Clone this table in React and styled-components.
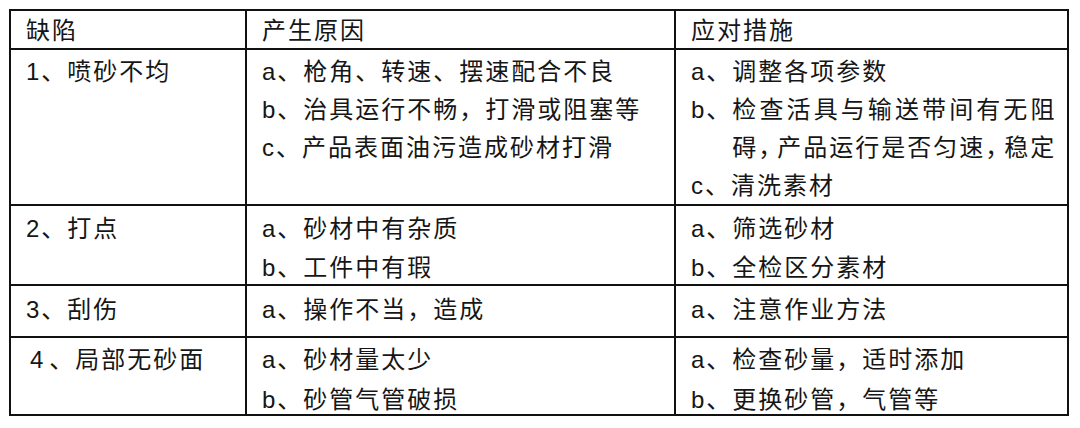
import React from "react"
import styled, { createGlobalStyle } from "styled-components"

const GlobalStyle = createGlobalStyle`
    html, body {
        margin: 0;
        padding: 0;
        background: #ffffff;
    }
    body {
        font-family: "Liberation Sans", "Noto Sans CJK SC", sans-serif;
        color: #161616;
    }
`

const Page = styled.div`
    padding: 9px 0 0 9px;
`

const Grid = styled.div`
    display: grid;
    grid-template-columns: 236px 429px 393px;
    grid-template-rows: 39px 156px 80px 52px 78px;
    width: max-content;
    border-top: 2px solid #111;
    border-left: 2px solid #111;
    font-size: 24px;
    letter-spacing: 2px;
    line-height: 38px;
`

const Cell = styled.div`
    box-sizing: border-box;
    padding: ${props => props.$top ?? 3}px 4px 0 15px;
    border-right: 2px solid #111;
    border-bottom: 2px solid #111;
    line-height: ${props => props.$lh ?? 38}px;
    white-space: nowrap;
    overflow: visible;
`

const HeadCell = styled(Cell)`
    padding-top: 1px;
`

const Item = styled.div`
    display: flex;
`

const Marker = styled.span`
    flex: none;
`

const Body = styled.span`
    display: block;
`

// Word justified the long line, so a few spans are stretched or squeezed
const Wide = styled.span`
    letter-spacing: 3.1px;
`

const Narrow = styled.span`
    letter-spacing: -5px;
`

const defects = [
    {
        name: "1、喷砂不均",
        lh: 38,
        causes: [
            { m: "a、", lines: ["枪角、转速、摆速配合不良"] },
            { m: "b、", lines: ["治具运行不畅，打滑或阻塞等"] },
            { m: "c、", lines: ["产品表面油污造成砂材打滑"] },
        ],
        fixes: [
            { m: "a、", lines: ["调整各项参数"] },
            {
                m: "b、",
                lines: [
                    <Wide>检查活具与输送带间有无阻</Wide>,
                    <>碍<Narrow>，</Narrow>产品运行是否匀速<Narrow>，</Narrow>稳定</>,
                ],
            },
            { m: "c、", lines: ["清洗素材"] },
        ],
    },
    {
        name: "2、打点",
        lh: 39,
        causes: [
            { m: "a、", lines: ["砂材中有杂质"] },
            { m: "b、", lines: ["工件中有瑕"] },
        ],
        fixes: [
            { m: "a、", lines: ["筛选砂材"] },
            { m: "b、", lines: ["全检区分素材"] },
        ],
    },
    {
        name: "3、刮伤",
        top: 5,
        causes: [{ m: "a、", lines: ["操作不当，造成"] }],
        fixes: [{ m: "a、", lines: ["注意作业方法"] }],
    },
    {
        name: "\u200A4\u200A、局部无砂面",
        lh: 40,
        top: 2,
        causes: [
            { m: "a、", lines: ["砂材量太少"] },
            { m: "b、", lines: ["砂管气管破损"] },
        ],
        fixes: [
            { m: "a、", lines: ["检查砂量，适时添加"] },
            { m: "b、", lines: ["更换砂管，气管等"] },
        ],
    },
]

function ItemList({ items }) {
    return items.map((it, i) => (
        <Item key={i}>
            <Marker>{it.m}</Marker>
            <Body>
                {it.lines.map((l, j) => (
                    <React.Fragment key={j}>
                        {j > 0 && <br />}
                        {l}
                    </React.Fragment>
                ))}
            </Body>
        </Item>
    ))
}

export default function App() {
    return (
        <>
            <GlobalStyle />
            <Page>
                <Grid>
                    <HeadCell>缺陷</HeadCell>
                    <HeadCell>产生原因</HeadCell>
                    <HeadCell>应对措施</HeadCell>
                    {defects.map(d => (
                        <React.Fragment key={d.name}>
                            <Cell $top={d.top} $lh={d.lh}>{d.name}</Cell>
                            <Cell $top={d.top} $lh={d.lh}><ItemList items={d.causes} /></Cell>
                            <Cell $top={d.top} $lh={d.lh}><ItemList items={d.fixes} /></Cell>
                        </React.Fragment>
                    ))}
                </Grid>
            </Page>
        </>
    )
}
